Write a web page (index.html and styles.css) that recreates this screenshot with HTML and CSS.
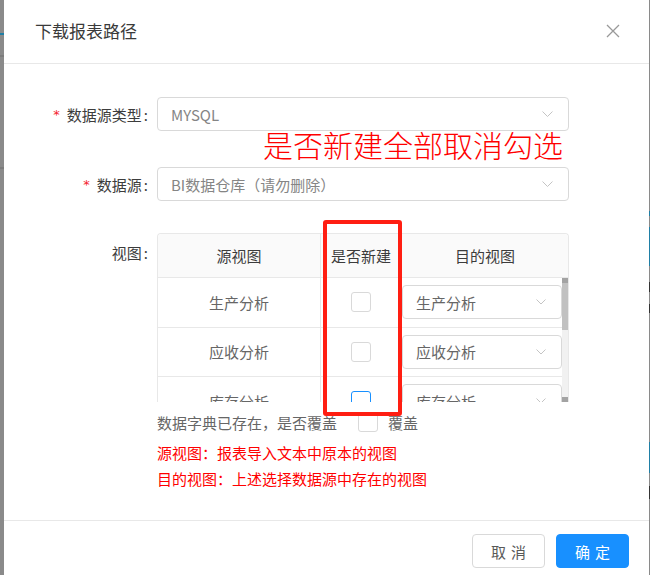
FILE: index.html
```html
<!DOCTYPE html>
<html lang="zh-CN">
<head>
<meta charset="utf-8">
<title>下载报表路径</title>
<link rel="stylesheet" href="styles.css">
</head>
<body>
<div class="page">
  <div class="edge edge-left">
    <span class="mark blue m-l1"></span>
    <span class="mark dark m-l2"></span>
    <span class="mark dark m-l3"></span>
  </div>
  <div class="modal">
    <div class="modal-header">
      <div class="title">下载报表路径</div>
      <button class="close" aria-label="关闭">
        <svg width="14" height="14" viewBox="0 0 14 14"><path d="M1 1L13 13M13 1L1 13" stroke="#999" stroke-width="1.3" fill="none"/></svg>
      </button>
    </div>
    <div class="modal-body">
      <div class="form-row row-select">
        <label class="label"><span class="req">*</span>数据源类型</label>
        <div class="select">
          <span class="select-text">MYSQL</span>
          <svg class="chev" width="11" height="6" viewBox="0 0 11 6"><path d="M0.5 0.5L5.5 5.5L10.5 0.5" stroke="#c4c4c4" stroke-width="1" fill="none"/></svg>
        </div>
      </div>
      <div class="form-row row-select row-second">
        <label class="label"><span class="req">*</span>数据源</label>
        <div class="select">
          <span class="select-text">BI数据仓库（请勿删除）</span>
          <svg class="chev" width="11" height="6" viewBox="0 0 11 6"><path d="M0.5 0.5L5.5 5.5L10.5 0.5" stroke="#c4c4c4" stroke-width="1" fill="none"/></svg>
        </div>
      </div>
      <div class="form-row row-table">
        <label class="label label-top">视图</label>
        <div class="table">
          <div class="thead">
            <div class="th">源视图</div>
            <div class="th">是否新建</div>
            <div class="th">目的视图</div>
          </div>
          <div class="tbody">
            <div class="rows">
              <div class="tr">
                <div class="td">生产分析</div>
                <div class="td"><span class="checkbox"></span></div>
                <div class="td td-select">
                  <div class="select select-sm"><span class="select-text">生产分析</span><svg class="chev" width="10" height="6" viewBox="0 0 10 6"><path d="M0.5 0.5L5 5L9.5 0.5" stroke="#c4c4c4" stroke-width="1" fill="none"/></svg></div>
                </div>
              </div>
              <div class="tr">
                <div class="td">应收分析</div>
                <div class="td"><span class="checkbox"></span></div>
                <div class="td td-select">
                  <div class="select select-sm"><span class="select-text">应收分析</span><svg class="chev" width="10" height="6" viewBox="0 0 10 6"><path d="M0.5 0.5L5 5L9.5 0.5" stroke="#c4c4c4" stroke-width="1" fill="none"/></svg></div>
                </div>
              </div>
              <div class="tr">
                <div class="td">库存分析</div>
                <div class="td"><span class="checkbox checkbox-focus"></span></div>
                <div class="td td-select">
                  <div class="select select-sm"><span class="select-text">库存分析</span><svg class="chev" width="10" height="6" viewBox="0 0 10 6"><path d="M0.5 0.5L5 5L9.5 0.5" stroke="#c4c4c4" stroke-width="1" fill="none"/></svg></div>
                </div>
              </div>
            </div>
            <div class="scrollbar">
              <span class="sb-btn"></span>
              <span class="sb-thumb"></span>
              <span class="sb-track"></span>
              <span class="sb-btn"></span>
            </div>
          </div>
        </div>
      </div>
      <div class="form-row row-cover">
        <span></span>
        <div class="cover">
          <span>数据字典已存在，是否覆盖</span>
          <span class="checkbox cover-box"></span>
          <span>覆盖</span>
        </div>
      </div>
      <div class="form-row row-notes">
        <span></span>
        <div class="notes">
          <p>源视图：报表导入文本中原本的视图</p>
          <p>目的视图：上述选择数据源中存在的视图</p>
        </div>
      </div>
      <div class="annotation">是否新建全部取消勾选</div>
      <div class="highlight"></div>
    </div>
    <div class="modal-footer">
      <button class="btn"><span>取消</span></button>
      <button class="btn btn-primary"><span>确定</span></button>
    </div>
  </div>
  <div class="edge edge-right">
    <span class="mark blue m-r1"></span>
    <span class="mark blue m-r2"></span>
    <span class="mark black m-r3"></span>
    <span class="mark black m-r4"></span>
    <span class="mark blue m-r5"></span>
    <span class="mark black m-r6"></span>
  </div>
</div>
</body>
</html>
```

FILE: styles.css
```css
* {
  box-sizing: border-box;
  margin: 0;
  padding: 0;
}

html, body {
  width: 650px;
  height: 575px;
  overflow: hidden;
}

body {
  font-family: "Noto Sans CJK SC", "Noto Sans", sans-serif;
  font-size: 15px;
  color: #666;
  background: #8a8a8a;
}

.page {
  display: flex;
  height: 575px;
}

.edge {
  flex: none;
  position: relative;
  background: #8a8a8a;
}

.edge-left { width: 4px; }
.edge-right { width: 1px; }

.mark {
  position: absolute;
  left: 0;
  right: 0;
}
.blue { background: #1f7fa6; }
.dark { background: #7c7c7c; }
.black { background: #333; }
.m-l1 { top: 33px; height: 2px; }
.m-l2 { top: 55px; height: 2px; }
.m-l3 { top: 167px; height: 2px; }
.m-r1 { top: 211px; height: 5px; }
.m-r2 { top: 227px; height: 39px; }
.m-r3 { top: 282px; height: 10px; }
.m-r4 { top: 304px; height: 9px; }
.m-r5 { top: 442px; height: 31px; }
.m-r6 { top: 486px; height: 13px; }

.modal {
  flex: none;
  width: 645px;
  background: #fff;
  display: flex;
  flex-direction: column;
}

.modal-header {
  height: 64px;
  border-bottom: 1px solid #e8e8e8;
  display: flex;
  align-items: center;
  justify-content: space-between;
  padding: 0 29px 1px 31px;
}

.title {
  font-size: 17px;
  line-height: 24px;
  color: #3a3a3a;
}

.close {
  width: 14px;
  height: 14px;
  border: 0;
  background: none;
  display: flex;
}

.modal-body {
  position: relative;
  height: 456px;
  padding-top: 33px;
}

.form-row {
  display: grid;
  grid-template-columns: 144px 412px;
  column-gap: 9px;
}

.row-second { margin-top: 36px; }
.row-table { margin-top: 32px; }

.label {
  height: 34px;
  display: flex;
  justify-content: flex-end;
  align-items: center;
  color: #3c3c3c;
  white-space: nowrap;
}

.label::after {
  content: ":";
  margin-left: 2px;
}

.label-top {
  height: 39px;
}

.req {
  color: #f5222d;
  font-family: "DejaVu Sans", sans-serif;
  font-size: 13px;
  line-height: 13px;
  margin-right: 7px;
}

.select {
  height: 34px;
  border: 1px solid #d9d9d9;
  border-radius: 4px;
  background: #fff;
  display: flex;
  align-items: center;
  justify-content: space-between;
  padding: 0 15px 0 13px;
}

.select-text {
  color: #858585;
  white-space: nowrap;
}

.select-sm {
  width: 160px;
  height: 34px;
  padding: 0 15px 0 13px;
}

.select-sm .select-text {
  color: #666;
}

.table {
  width: 412px;
  border: 1px solid #e8e8e8;
  border-bottom: 0;
  border-radius: 4px 4px 0 0;
}

.thead {
  display: grid;
  grid-template-columns: 163px 81px 1fr;
  height: 44px;
  background: #fafafa;
  border-bottom: 1px solid #e8e8e8;
  border-radius: 4px 4px 0 0;
}

.th {
  display: flex;
  align-items: center;
  justify-content: center;
  color: #3c3c3c;
  border-right: 1px solid #e8e8e8;
}

.th:last-child { border-right: 0; }

.tbody {
  display: flex;
  height: 124px;
  overflow: hidden;
}

.rows {
  flex: 1;
  overflow: hidden;
}

.tr {
  display: grid;
  grid-template-columns: 163px 81px 160px;
  height: 49.5px;
  border-bottom: 1px solid #e8e8e8;
}

.td {
  display: flex;
  align-items: center;
  justify-content: center;
  border-right: 1px solid #e8e8e8;
  color: #666;
}

.td-select {
  border-right: 0;
  justify-content: flex-start;
}

.checkbox {
  display: inline-block;
  width: 20px;
  height: 20px;
  border: 1px solid #d9d9d9;
  border-radius: 3px;
  background: #fff;
}

.checkbox-focus {
  border-color: #1890ff;
}

.scrollbar {
  width: 6px;
  flex: none;
  display: flex;
  flex-direction: column;
  background: #f1f1f1;
}

.sb-btn {
  height: 5px;
  background: #a3a3a3;
}

.sb-thumb {
  height: 47px;
  background: #c1c1c1;
}

.sb-track {
  flex: 1;
}

.row-cover {
  margin-top: 9px;
}

.cover {
  display: flex;
  align-items: center;
  height: 22px;
  color: #666;
}

.cover-box {
  margin: 0 10px 0 21px;
}

.row-notes {
  margin-top: 7px;
}

.notes p {
  color: #ff0000;
  line-height: 26px;
}

.annotation {
  position: absolute;
  left: 259px;
  top: 65px;
  font-size: 30px;
  line-height: 30px;
  font-weight: 300;
  color: #ff0000;
  white-space: nowrap;
}

.highlight {
  position: absolute;
  left: 319px;
  top: 156px;
  width: 79px;
  height: 196px;
  border: 4px solid #ff1e12;
  border-radius: 3px;
}

.modal-footer {
  flex: 1;
  border-top: 1px solid #e8e8e8;
  display: flex;
  justify-content: flex-end;
  align-items: flex-start;
  gap: 11px;
  padding: 13px 20px 0 0;
}

.btn {
  width: 73px;
  height: 34px;
  border: 1px solid #d9d9d9;
  border-radius: 4px;
  background: #fff;
  color: #595959;
  font-family: inherit;
  font-size: 15px;
  display: flex;
  align-items: center;
  justify-content: center;
}

.btn span {
  letter-spacing: 0.34em;
  margin-right: -0.34em;
}

.btn-primary {
  background: #1890ff;
  border-color: #1890ff;
  color: #fff;
}
```
